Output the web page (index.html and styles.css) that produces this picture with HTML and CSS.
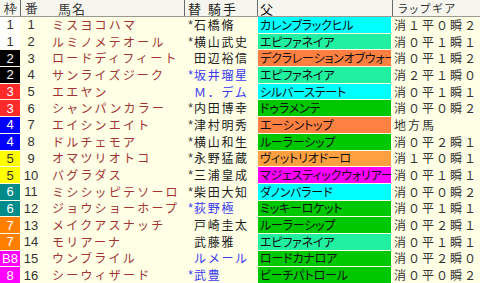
FILE: index.html
```html
<!DOCTYPE html>
<html lang="ja">
<head>
<meta charset="utf-8">
<link rel="stylesheet" href="styles.css">
</head>
<body>
<div class="table">
  <div class="head">
    <div class="h waku">枠</div>
    <div class="h num">番</div>
    <div class="h name">馬名</div>
    <div class="h jock">替 騎手</div>
    <div class="h sire">父</div>
    <div class="h lap">ラップギア</div>
  </div>
  <div class="body">
    <div class="row"><div class="waku w1">1</div><div class="num">1</div><div class="name">ミスヨコハマ</div><div class="mark">*</div><div class="jock">石橋脩</div><div class="sire s-cyan">カレンブラックヒル</div><div class="lap">消１平０瞬２</div></div>
    <div class="row"><div class="waku w1">1</div><div class="num">2</div><div class="name">ルミノメテオール</div><div class="mark">*</div><div class="jock">横山武史</div><div class="sire s-mint">エピファネイア</div><div class="lap">消０平１瞬１</div></div>
    <div class="row"><div class="waku w2">2</div><div class="num">3</div><div class="name">ロードディフィート</div><div class="mark"></div><div class="jock">田辺裕信</div><div class="sire s-orange">デクラレーションオブウォー</div><div class="lap">消０平１瞬２</div></div>
    <div class="row"><div class="waku w2">2</div><div class="num">4</div><div class="name">サンライズジーク</div><div class="mark blue">*</div><div class="jock blue">坂井瑠星</div><div class="sire s-mint">エピファネイア</div><div class="lap">消２平１瞬０</div></div>
    <div class="row"><div class="waku w3">3</div><div class="num">5</div><div class="name">エエヤン</div><div class="mark"></div><div class="jock blue">Ｍ．デム</div><div class="sire s-cyan">シルバーステート</div><div class="lap">消０平１瞬１</div></div>
    <div class="row"><div class="waku w3">3</div><div class="num">6</div><div class="name">シャンパンカラー</div><div class="mark">*</div><div class="jock">内田博幸</div><div class="sire s-green">ドゥラメンテ</div><div class="lap">消０平０瞬２</div></div>
    <div class="row"><div class="waku w4">4</div><div class="num">7</div><div class="name">エイシンエイト</div><div class="mark">*</div><div class="jock">津村明秀</div><div class="sire s-orange">エーシントップ</div><div class="lap">地方馬</div></div>
    <div class="row"><div class="waku w4">4</div><div class="num">8</div><div class="name">ドルチェモア</div><div class="mark">*</div><div class="jock">横山和生</div><div class="sire s-green">ルーラーシップ</div><div class="lap">消０平２瞬１</div></div>
    <div class="row"><div class="waku w5">5</div><div class="num">9</div><div class="name">オマツリオトコ</div><div class="mark">*</div><div class="jock">永野猛蔵</div><div class="sire s-lorange">ヴィットリオドーロ</div><div class="lap">消１平０瞬１</div></div>
    <div class="row"><div class="waku w5">5</div><div class="num">10</div><div class="name">バグラダス</div><div class="mark">*</div><div class="jock">三浦皇成</div><div class="sire s-magenta">マジェスティックウォリアー</div><div class="lap">消０平１瞬１</div></div>
    <div class="row"><div class="waku w6">6</div><div class="num">11</div><div class="name">ミシシッピテソーロ</div><div class="mark">*</div><div class="jock">柴田大知</div><div class="sire s-cyan">ダノンバラード</div><div class="lap">消０平０瞬２</div></div>
    <div class="row"><div class="waku w6">6</div><div class="num">12</div><div class="name">ジョウショーホープ</div><div class="mark blue">*</div><div class="jock blue">荻野極</div><div class="sire s-green">ミッキーロケット</div><div class="lap">消０平１瞬１</div></div>
    <div class="row"><div class="waku w7">7</div><div class="num">13</div><div class="name">メイクアスナッチ</div><div class="mark"></div><div class="jock">戸崎圭太</div><div class="sire s-green">ルーラーシップ</div><div class="lap">消０平２瞬１</div></div>
    <div class="row"><div class="waku w7">7</div><div class="num">14</div><div class="name">モリアーナ</div><div class="mark"></div><div class="jock">武藤雅</div><div class="sire s-mint">エピファネイア</div><div class="lap">消０平１瞬１</div></div>
    <div class="row"><div class="waku w8">B8</div><div class="num">15</div><div class="name">ウンブライル</div><div class="mark"></div><div class="jock blue">ルメール</div><div class="sire s-green">ロードカナロア</div><div class="lap">消０平２瞬０</div></div>
    <div class="row"><div class="waku w8">8</div><div class="num">16</div><div class="name">シーウィザード</div><div class="mark blue">*</div><div class="jock blue">武豊</div><div class="sire s-green">ビーチパトロール</div><div class="lap">消０平０瞬２</div></div>
  </div>
</div>
</body>
</html>
```

FILE: styles.css
```css
html, body {
  margin: 0;
  padding: 0;
  background: #FFFFE6;
}
.table {
  width: 480px;
  height: 283px;
  overflow: hidden;
  font-family: "Noto Sans CJK JP", sans-serif;
  color: #333;
}
.head {
  display: grid;
  grid-template-columns: 20px 22px 142px 72px 136px 88px;
  height: 16px;
  border-bottom: 1px solid #9a9a90;
  background: #F6F6EE;
}
.h {
  display: flex;
  align-items: center;
  height: 16px;
  font-size: 13px;
  line-height: 1;
  color: #383838;
  white-space: nowrap;
}
.h.num, .h.jock, .h.sire, .h.lap {
  box-shadow: inset 1px 0 0 #6a6a6a;
}
.h.waku, .h.num { justify-content: center; }
.h.name { padding-left: 16px; letter-spacing: 1px; }
.h.jock { padding-left: 4px; letter-spacing: 2px; }
.h.sire { padding-left: 3px; }
.h.lap { padding-left: 6px; font-size: 11px; font-feature-settings: "palt"; }
.body {
  display: grid;
  grid-template-rows: repeat(16, minmax(0, 1fr));
  row-gap: 1px;
  height: 266px;
}
.row {
  display: grid;
  grid-template-columns: 20px 22px 142px 10px 63px 134px 89px;
  min-height: 0;
  font-size: 12px;
  line-height: 1;
  white-space: nowrap;
}
.row > div {
  display: flex;
  align-items: center;
  min-height: 0;
  overflow: hidden;
}
.waku, .num {
  justify-content: center;
  font-family: "Liberation Sans", sans-serif;
  font-size: 13px;
}
.num { color: #333; }
.w1 { background: #FFFFFF; color: #333; }
.w2 { background: #000000; color: #FFFFFF; }
.w3 { background: #FF2A2A; color: #FFFFFF; }
.w4 { background: #0000FF; color: #FFFFFF; }
.w5 { background: #FFFF00; color: #333; }
.w6 { background: #008B8B; color: #FFFFFF; }
.w7 { background: #FF8000; color: #FFFFFF; }
.w8 { background: #FF00FF; color: #FFFFFF; }
.row > .name {
  padding-left: 10px;
  color: #A03434;
  letter-spacing: 2.2px;
  overflow: visible;
}
.mark {
  justify-content: flex-end;
  padding-right: 1px;
  font-family: "Liberation Sans", sans-serif;
  font-size: 12px;
  color: #333;
}
.jock {
  color: #222;
  letter-spacing: 1.7px;
}
.row > .blue { color: #3A3AF0; }
.sire {
  margin-left: 1px;
  padding-left: 2px;
  color: #111;
  font-feature-settings: "palt";
  letter-spacing: -0.2px;
}
.s-cyan { background: #00FFFF; }
.s-mint { background: #20F0A0; }
.s-orange { background: #FF8040; }
.s-lorange { background: #FFA040; }
.s-green { background: #00C800; }
.s-magenta { background: #FF00FF; }
.lap {
  padding-left: 3px;
  color: #333;
  letter-spacing: 2px;
}
```
